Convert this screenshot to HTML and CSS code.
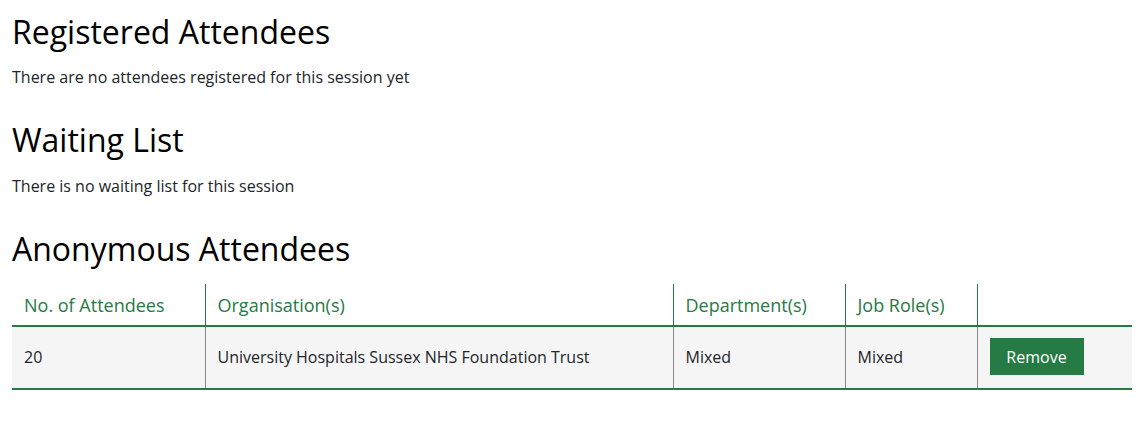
FILE: index.html
```html
<!DOCTYPE html>
<html>
<head>
<meta charset="utf-8">
<link rel="stylesheet" href="styles.css">
</head>
<body>
<div class="page">
  <h2 class="title">Registered Attendees</h2>
  <p class="note">There are no attendees registered for this session yet</p>
  <h2 class="title">Waiting List</h2>
  <p class="note">There is no waiting list for this session</p>
  <h2 class="title">Anonymous Attendees</h2>
  <table class="grid">
    <colgroup>
      <col class="c1"><col class="c2"><col class="c3"><col class="c4"><col class="c5">
    </colgroup>
    <thead>
      <tr>
        <th>No. of Attendees</th>
        <th>Organisation(s)</th>
        <th>Department(s)</th>
        <th>Job Role(s)</th>
        <th></th>
      </tr>
    </thead>
    <tbody>
      <tr>
        <td>20</td>
        <td>University Hospitals Sussex NHS Foundation Trust</td>
        <td>Mixed</td>
        <td>Mixed</td>
        <td><button class="btn">Remove</button></td>
      </tr>
    </tbody>
  </table>
</div>
</body>
</html>
```
FILE: styles.css
```css
html, body {
  margin: 0;
  padding: 0;
  background: #fff;
}
body {
  font-family: "Open Sans", "Liberation Sans", sans-serif;
  color: #212529;
}
.page {
  padding: 0 6px 0 12px;
}
.title {
  font-size: 32px;
  font-weight: 400;
  color: #000;
  line-height: 1.2;
  margin: 13px 0 14px;
}
.note {
  font-size: 16px;
  margin: 0 0 32px;
  line-height: 1.5;
}
.grid {
  width: 1120px;
  margin-top: 16px;
  border-collapse: collapse;
  table-layout: fixed;
  font-size: 16px;
}
.c1 { width: 193px; }
.c2 { width: 468px; }
.c3 { width: 172px; }
.c4 { width: 132px; }
.c5 { width: 155px; }
.grid th {
  text-align: left;
  font-weight: 400;
  font-size: 18px;
  color: #267a43;
  padding: 0 12px;
  height: 41px;
  border-left: 1px solid #267a43;
  border-bottom: 2px solid #267a43;
}
.grid td {
  background: #f5f5f5;
  padding: 0 12px 2px;
  height: 59px;
  border-left: 1px solid #8a8a8a;
  border-bottom: 2px solid #267a43;
}
.grid th:first-child, .grid td:first-child {
  border-left: none;
}
.btn {
  font-family: inherit;
  font-size: 16px;
  color: #fff;
  background: #267a43;
  border: none;
  border-radius: 0;
  width: 94px;
  height: 37px;
  padding: 0;
}
```
